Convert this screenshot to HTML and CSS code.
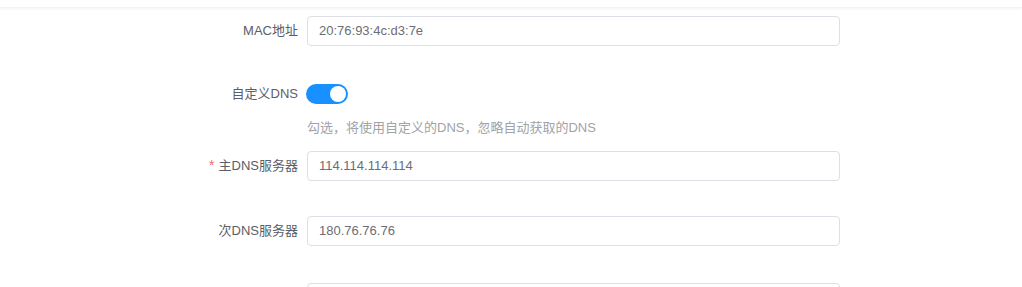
FILE: index.html
```html
<!DOCTYPE html>
<html lang="zh-CN">
<head>
<meta charset="utf-8">
<title>DNS 设置</title>
<link rel="stylesheet" href="styles.css">
</head>
<body>
<div class="topbar"></div>
<form class="form">
  <div class="row row-mac">
    <label class="label">MAC地址</label>
    <div class="input"><span>20:76:93:4c:d3:7e</span></div>
  </div>
  <div class="row row-switch">
    <label class="label">自定义DNS</label>
    <div class="control"><span class="switch"><span class="knob"></span></span></div>
  </div>
  <div class="row row-help">
    <span></span>
    <div class="help">勾选，将使用自定义的DNS，忽略自动获取的DNS</div>
  </div>
  <div class="row row-dns1">
    <label class="label"><span class="req">*</span>主DNS服务器</label>
    <div class="input"><span>114.114.114.114</span></div>
  </div>
  <div class="row row-dns2">
    <label class="label">次DNS服务器</label>
    <div class="input"><span>180.76.76.76</span></div>
  </div>
  <div class="row row-next">
    <label class="label"></label>
    <div class="input"></div>
  </div>
</form>
</body>
</html>
```

FILE: styles.css
```css
html, body {
  margin: 0;
  padding: 0;
  background: #ffffff;
  overflow: hidden;
}
body {
  font-family: "Liberation Sans", "Noto Sans CJK SC", sans-serif;
  font-size: 13px;
  color: #606266;
}
.topbar {
  height: 7px;
  background: #ffffff;
  border-bottom: 1px solid #f2f3f5;
  box-shadow: 0 1px 3px rgba(0, 0, 0, 0.05);
}
.form {
  margin: 0;
  padding-top: 8px;
  height: 279px;
  box-sizing: border-box;
  overflow: hidden;
}
.row {
  display: grid;
  grid-template-columns: 298px 533px;
  column-gap: 9px;
  align-items: center;
}
.label {
  text-align: right;
  color: #5a5e66;
  height: 30px;
  line-height: 30px;
  white-space: nowrap;
}
.req {
  color: #f56c6c;
  margin-right: 4px;
  font-size: 14px;
  line-height: 1;
}
.input {
  height: 30px;
  box-sizing: border-box;
  border: 1px solid #dcdfe6;
  border-radius: 4px;
  padding: 0 11px;
  line-height: 28px;
  color: #6b6e75;
  background: #fff;
}
.row-switch {
  margin-top: 33px;
}
.control {
  height: 30px;
  display: flex;
  align-items: center;
}
.switch {
  width: 42px;
  height: 20px;
  border-radius: 10px;
  background: #1890ff;
  margin-left: -1px;
  display: flex;
  align-items: center;
  justify-content: flex-end;
  padding: 0 2px;
  box-sizing: border-box;
}
.knob {
  width: 16px;
  height: 16px;
  border-radius: 50%;
  background: #fff;
}
.row-help {
  margin-top: 10px;
}
.help {
  line-height: 18px;
  color: #a0a3a9;
}
.row-dns1 {
  margin-top: 14px;
}
.row-dns2 {
  margin-top: 35px;
}
.row-next {
  margin-top: 37px;
}
```
